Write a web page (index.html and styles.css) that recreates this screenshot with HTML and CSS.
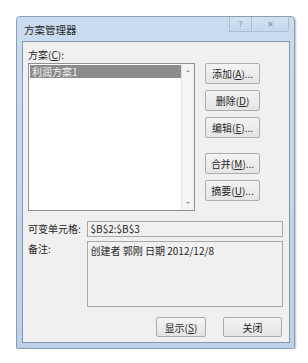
FILE: index.html
```html
<!DOCTYPE html>
<html lang="zh-CN">
<head>
    <meta charset="UTF-8">
    <title>方案管理器</title>
    <link rel="stylesheet" href="styles.css">
</head>
<body>
    <div class="window">
        <div class="titlebar">
            <span class="title">方案管理器</span>
            <div class="caption-btns">
                <span class="cap-btn help">?</span>
                <span class="cap-btn close">✕</span>
            </div>
        </div>
        <div class="content">
            <div class="label">方案(<u>C</u>):</div>
            <div class="top-row">
                <div class="listbox">
                    <div class="items">
                        <div class="item selected">利润方案1</div>
                    </div>
                    <div class="scrollbar">
                        <span class="arrow up"></span>
                        <span class="arrow down"></span>
                    </div>
                </div>
                <div class="side-btns">
                    <button class="btn">添加(<u>A</u>)...</button>
                    <button class="btn">删除(<u>D</u>)</button>
                    <button class="btn">编辑(<u>E</u>)...</button>
                    <button class="btn gap">合并(<u>M</u>)...</button>
                    <button class="btn">摘要(<u>U</u>)...</button>
                </div>
            </div>
            <div class="field-row first">
                <span class="field-label">可变单元格:</span>
                <div class="field">$B$2:$B$3</div>
            </div>
            <div class="field-row">
                <span class="field-label">备注:</span>
                <div class="field note">创建者 郭刚 日期 2012/12/8</div>
            </div>
            <div class="bottom-btns">
                <button class="btn wide">显示(<u>S</u>)</button>
                <button class="btn wide close-btn">关闭</button>
            </div>
        </div>
    </div>
</body>
</html>
```

FILE: styles.css
```css
body {
    margin: 0;
    background: #ffffff;
    font-family: "Noto Sans CJK SC", "Liberation Sans", sans-serif;
    font-size: 10px;
    color: #262626;
}
.window {
    margin: 16px 0 0 16px;
    width: 279px;
    height: 333px;
    box-sizing: border-box;
    border: 1px solid #8b9db5;
    border-radius: 4px 4px 2px 2px;
    background: linear-gradient(#c9dcf0, #bcd2ea);
    display: flex;
    flex-direction: column;
    box-shadow: 1px 1px 2px rgba(0, 0, 0, 0.25);
}
.titlebar {
    height: 24px;
    display: flex;
    align-items: flex-start;
    justify-content: space-between;
    padding-left: 7px;
}
.title {
    font-size: 10.5px;
    line-height: 25px;
    color: #2a2a2a;
}
.caption-btns {
    display: flex;
    margin-right: 5px;
}
.cap-btn {
    height: 14px;
    line-height: 14px;
    text-align: center;
    font-size: 8px;
    color: #7a8ca3;
    border: 1px solid #a9bdd3;
    border-top: none;
    background: linear-gradient(#d3e2f2, #c4d8ed);
}
.help {
    width: 21px;
}
.close {
    width: 36px;
    border-left: none;
    border-radius: 0 0 3px 0;
}
.content {
    flex: 1;
    margin: 0 4px 5px 5px;
    border: 1px solid #8a97a8;
    background: #f0f0f0;
    padding: 4px 6px 0 5px;
}
.label {
    line-height: 17px;
}
u {
    text-decoration: underline;
}
.top-row {
    display: flex;
}
.listbox {
    width: 167px;
    height: 148px;
    box-sizing: border-box;
    border: 1px solid #8f8f8f;
    background: #ffffff;
    display: flex;
}
.items {
    flex: 1;
    padding: 1px 0 0 1px;
}
.item {
    height: 13px;
    line-height: 13px;
    padding-left: 2px;
}
.selected {
    background: #8c8c8c;
    color: #f2f2f2;
}
.scrollbar {
    width: 12px;
    background: #f4f4f4;
    border-left: 1px solid #e4e4e4;
    display: flex;
    flex-direction: column;
    justify-content: space-between;
    align-items: center;
    padding: 6px 0;
}
.arrow {
    width: 0;
    height: 0;
    border-left: 2px solid transparent;
    border-right: 2px solid transparent;
}
.up {
    border-bottom: 2px solid #9a9a9a;
}
.down {
    border-top: 2px solid #9a9a9a;
}
.side-btns {
    display: flex;
    flex-direction: column;
    margin-left: 10px;
    gap: 6px;
}
.btn {
    width: 55px;
    height: 21px;
    padding: 0;
    border: 1px solid #acacac;
    border-radius: 2px;
    background: linear-gradient(#f4f4f4, #e4e4e4);
    font-family: "Noto Sans CJK SC", "Liberation Sans", sans-serif;
    font-size: 10px;
    color: #262626;
}
.gap {
    margin-top: 9px;
}
.field-row {
    display: flex;
    margin-top: 4px;
}
.field-row.first {
    margin-top: 10px;
}
.field-label {
    width: 59px;
    line-height: 16px;
}
.field {
    width: 198px;
    height: 16px;
    box-sizing: border-box;
    border: 1px solid #a8a8a8;
    background: #f0f0f0;
    line-height: 14px;
    padding-left: 3px;
}
.note {
    height: 66px;
    padding-top: 2px;
}
.bottom-btns {
    display: flex;
    justify-content: flex-end;
    gap: 17px;
    margin-top: 10px;
    margin-right: 1px;
}
.wide {
    width: 50px;
    height: 20px;
}
.close-btn {
    width: 59px;
}
```
